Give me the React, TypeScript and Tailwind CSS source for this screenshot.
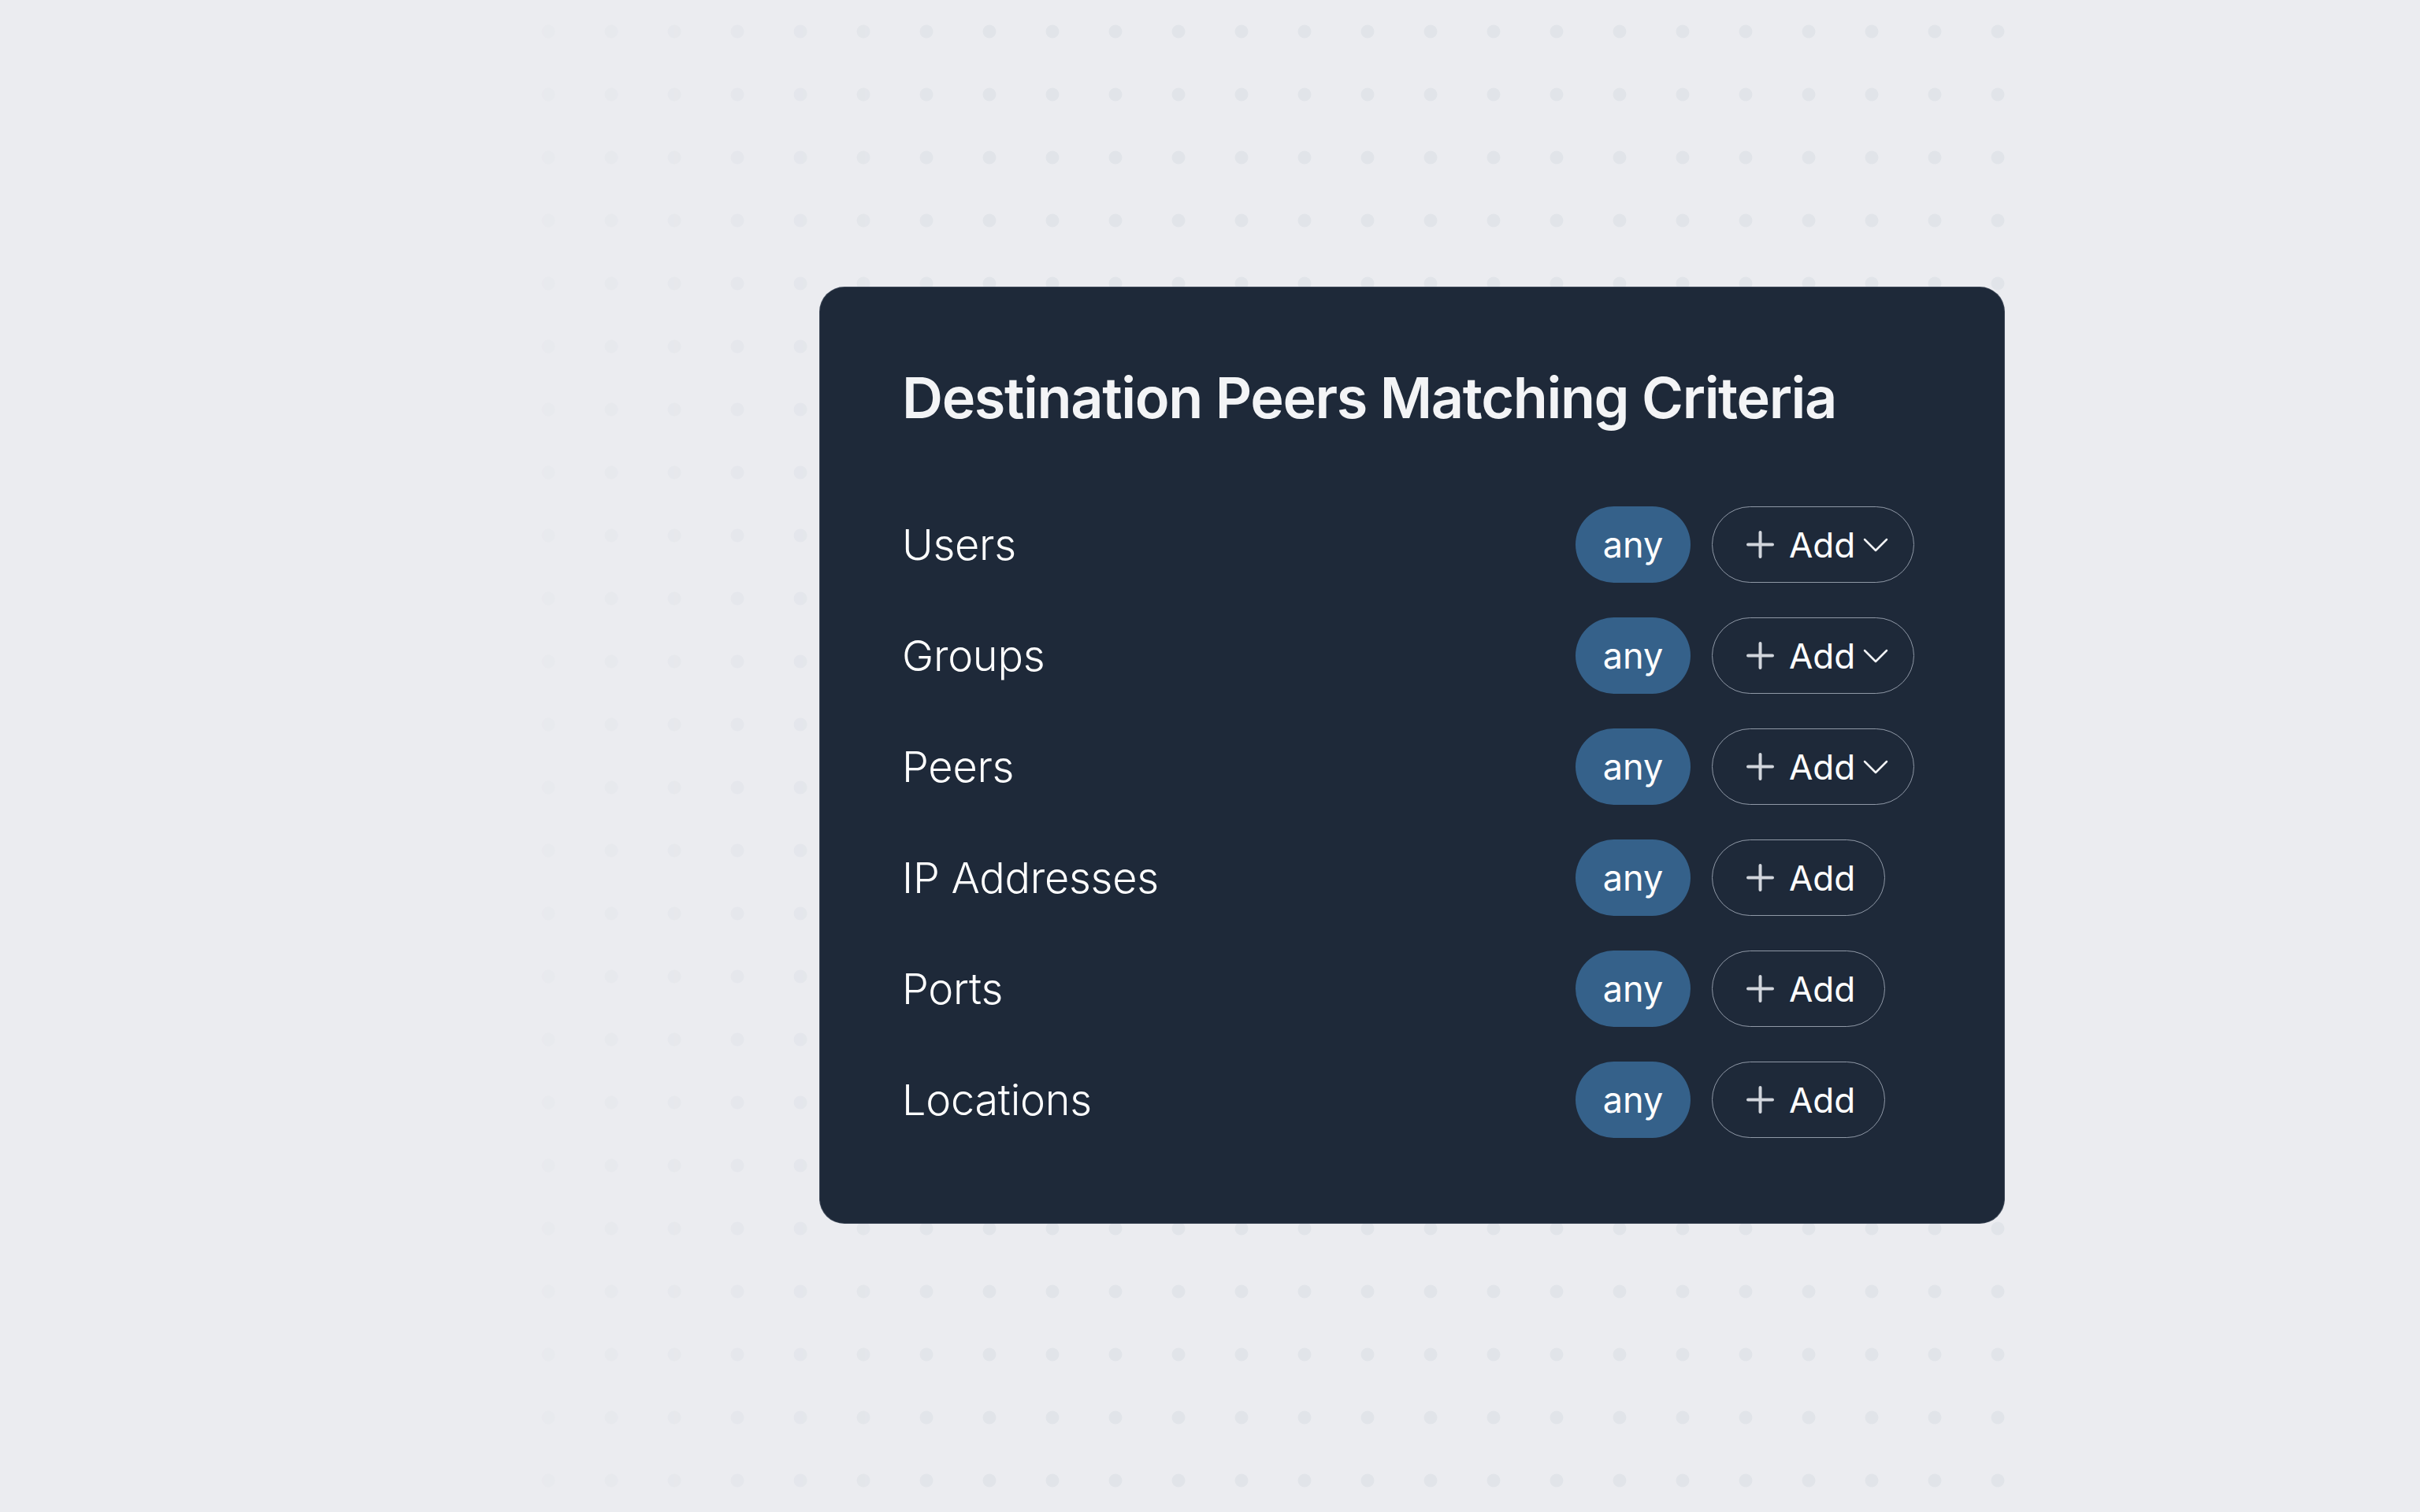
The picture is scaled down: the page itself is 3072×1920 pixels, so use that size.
import React from 'react';

const rows = [
  { label: 'Users', dropdown: true },
  { label: 'Groups', dropdown: true },
  { label: 'Peers', dropdown: true },
  { label: 'IP Addresses', dropdown: false },
  { label: 'Ports', dropdown: false },
  { label: 'Locations', dropdown: false },
];

function PlusIcon() {
  return (
    <svg width="35" height="35" viewBox="0 0 35 35" fill="none" className="shrink-0">
      <path d="M17.5 2v31M2 17.5h31" stroke="#d1d5dc" strokeWidth="4" strokeLinecap="round" />
    </svg>
  );
}

function ChevronIcon() {
  return (
    <svg width="32" height="18" viewBox="0 0 32 18" fill="none" className="shrink-0">
      <path d="M2 2l14 14L30 2" stroke="#f3f4f6" strokeWidth="2.5" strokeLinecap="round" strokeLinejoin="round" />
    </svg>
  );
}

function CriteriaRow({ label, dropdown }: { label: string; dropdown: boolean }) {
  return (
    <div className="flex h-[97px] items-center">
      <span className="flex-1 text-[54px] font-light tracking-[-0.005em] text-white">{label}</span>
      <div className="flex w-[440px] items-center gap-[27px]">
        <span className="flex h-[97px] w-[146px] items-center justify-center rounded-full bg-[#35618a] text-[45px] leading-none text-white">
          any
        </span>
        <button
          className={
            dropdown
              ? 'flex h-[97px] items-center rounded-full border-[1.5px] border-[#8f98a6] pl-[43px] pr-[32px] text-white'
              : 'flex h-[97px] items-center rounded-full border-[1.5px] border-[#8f98a6] pl-[43px] pr-[37px] text-white'
          }
        >
          <PlusIcon />
          <span className="ml-[19px] text-[44px] leading-none">Add</span>
          {dropdown && (
            <span className="ml-[10px] flex items-center">
              <ChevronIcon />
            </span>
          )}
        </button>
      </div>
    </div>
  );
}

export default function App() {
  return (
    <div className="relative h-[1920px] w-full overflow-hidden bg-[#ebecf0] font-['Inter',sans-serif]">
      {/* dotted backdrop, fades out towards the left */}
      <div className="pointer-events-none absolute left-[656px] top-0 h-[1920px] w-[1920px] bg-[radial-gradient(circle,#e1e4e9_8px,transparent_8.8px)] bg-[length:80px_80px] [mask-image:linear-gradient(to_right,rgba(0,0,0,0.2),black_30%)]" />
      <div className="relative pl-[1040px] pt-[364px]">
        <div className="w-[1505px] rounded-[32px] border border-[#5b6575]/50 bg-[#1e2939] px-[104px] pb-[108px] pt-[104px]">
          <h1 className="text-[72px] font-semibold leading-[72px] tracking-[-0.019em] text-gray-100">
            Destination Peers Matching Criteria
          </h1>
          <div className="mt-[102px] flex flex-col gap-[44px]">
            {rows.map((row) => (
              <CriteriaRow key={row.label} label={row.label} dropdown={row.dropdown} />
            ))}
          </div>
        </div>
      </div>
    </div>
  );
}
